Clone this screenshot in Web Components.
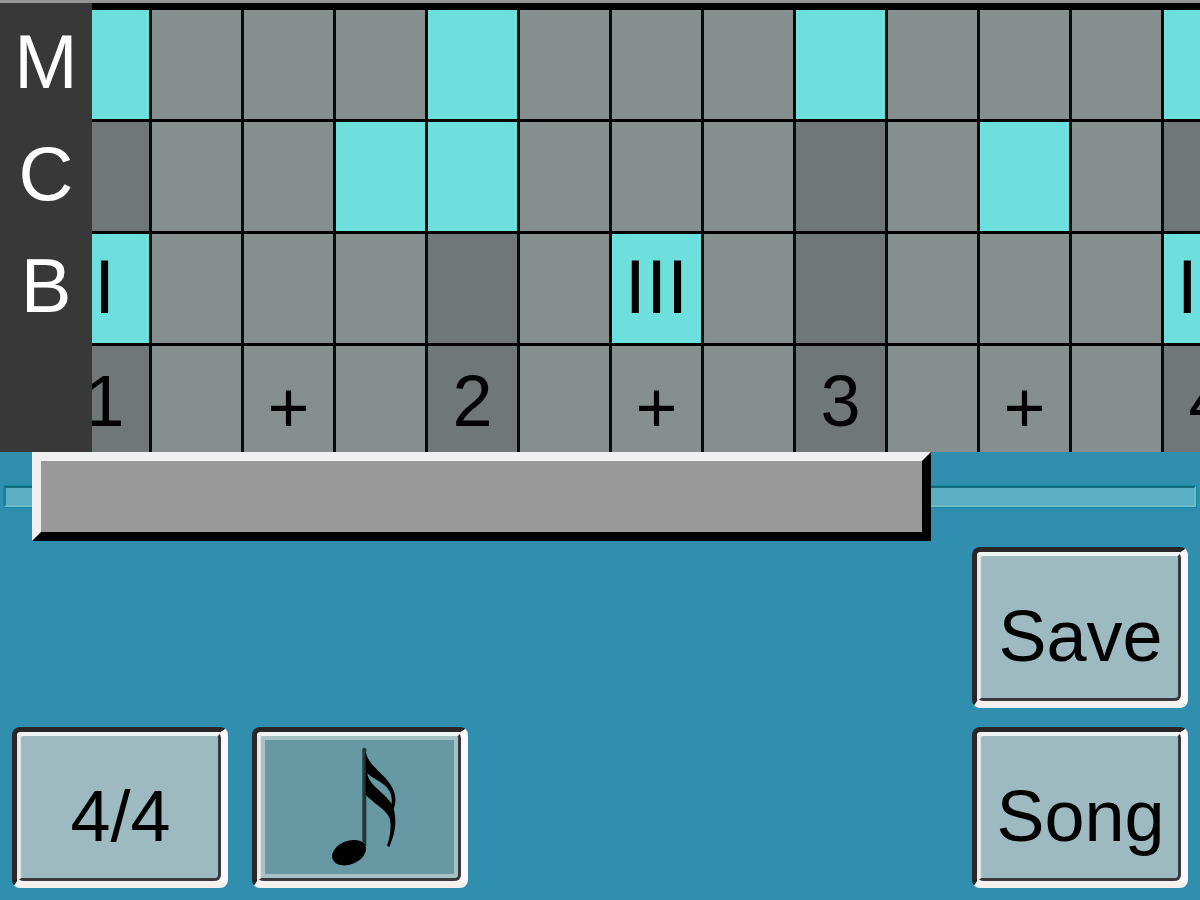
<!DOCTYPE html>
<html lang="en">
<head>
<meta charset="utf-8">
<title>Pattern editor</title>
<style>
  html, body { margin: 0; min-height: 100%; background: #308eaf; }
  body { font-family: "Liberation Sans", Arial, sans-serif; color: #000; }
</style>
</head>
<body>
<pattern-editor></pattern-editor>
<script>
const define = (name, html, setup) => {
  const template = document.createElement('template');
  template.innerHTML = html;
  customElements.define(name, class extends HTMLElement {
    connectedCallback() {
      if (this.shadowRoot) return;
      this.attachShadow({ mode: 'open' }).append(template.content.cloneNode(true));
      if (setup) setup(this, this.shadowRoot);
    }
  });
};

// One row of sixteenth steps: "#" lit, "d" on the beat, "." off the beat.
define('step-row', `
<style>
  :host { display: flex; height: 112px; overflow: hidden; }
  .name { flex: none; width: 92px; background: #383838; color: #fff; }
  .name, button, .count { display: flex; align-items: center; justify-content: center;
          box-sizing: border-box; font-size: 76px; line-height: 80px; padding: 0 0 4px; }
  .name { padding-bottom: 8px; }
  .clip { flex: 1; min-width: 0; overflow: hidden; background: #848f8e; border-bottom: 3px solid #000; }
  .steps { display: flex; height: 100%; margin-left: -32px; }
  button, .count { flex: none; width: 92px; margin: 0; border: 0; border-right: 3px solid #050b0b;
          border-radius: 0; background: #848f8e; font-family: inherit; color: #000; }
  .beat { background: #6f7777; }
  .lit { background: #6ddfdc; }
  .count { padding: 4px 0 0; font-size: 72px; }
  .and { padding-top: 16px; }
  :host([counts]) { height: 106px; }
  :host([counts]) .clip { border-bottom: 0; }
</style>
<div class="name"></div>
<div class="clip"><div class="steps"></div></div>`, (host, root) => {
  root.querySelector('.name').textContent = host.getAttribute('name') || '';
  const steps = root.querySelector('.steps');
  const labels = (host.getAttribute('labels') || '').split(',');
  const counts = host.hasAttribute('counts');
  [...host.getAttribute('pattern')].forEach((mark, i) => {
    const cell = document.createElement(counts ? 'span' : 'button');
    if (counts) cell.className = 'count';
    if (mark === '#') cell.classList.add('lit');
    if (mark === 'd') cell.classList.add('beat');
    cell.textContent = labels[i] || '';
    if (labels[i] === '+') cell.classList.add('and');
    if (!counts) {
      cell.type = 'button';
      cell.setAttribute('aria-label', `${host.getAttribute('name')} step ${i + 1} ${labels[i] || ''}`.trim());
      cell.setAttribute('aria-pressed', mark === '#');
      cell.onclick = () => cell.setAttribute('aria-pressed', cell.classList.toggle('lit'));
    }
    steps.append(cell);
  });
});

define('step-grid', `
<style>
  :host { display: block; border-top: 3px solid #969696; background: #000; }
  .edge { height: 7px; border-left: 92px solid #383838; background: #000; }
</style>
<div class="edge"></div>
<slot></slot>`);

define('pattern-scroller', `
<style>
  :host { display: block; padding: 0 4px; }
  input { -webkit-appearance: none; appearance: none; display: block; width: 100%; height: 89px;
          margin: 0; background: none; outline: none; }
  input::-webkit-slider-runnable-track { box-sizing: border-box; height: 21px; background: #5bb0c6;
          border: 2px solid; border-color: #116c7f #6dbbc5 #6dbbc5 #1a8299;
          box-shadow: 0 0 0 1px #168aa4; }
  input::-webkit-slider-thumb { -webkit-appearance: none; position: relative; box-sizing: border-box;
          width: 899px; height: 89px; margin-top: -36px; background: #999; border: 9px solid;
          border-color: #f0f0f0 #000 #000 #f0f0f0; border-radius: 0; }
</style>
<input type="range" min="0" max="100" value="9" aria-label="Scroll pattern">`);

define('bevel-button', `
<style>
  :host { display: block; height: 161px; }
  button { display: flex; width: 100%; height: 100%; margin: 0; padding: 0; box-sizing: border-box;
          border: 5px solid; border-width: 5px 7px 7px 5px;
          border-color: #2b2729 #fbf9f9 #f4f1ef #2b2729; border-radius: 8px; background: #f4f4f4;
          font-family: inherit; color: #000; }
  .face { flex: 1; align-self: stretch; display: flex; align-items: center; justify-content: center;
          box-sizing: border-box; border: 4px solid; border-width: 4px 3px 3px 4px;
          border-color: #eef3f3 #39383c #39383c #e6e8e8; border-radius: 6px;
          background: #9dbac1; font-size: 72px; line-height: 80px; padding: 18px 0 0 2px; }
  :host([pressed]) .face { padding: 0 0 0 8px; background: #6699a3; box-shadow: inset 0 0 0 4px #a6c2c4; }
</style>
<button type="button"><span class="face"><slot></slot></span></button>`, (host, root) => {
  const label = host.getAttribute('label');
  if (label) root.querySelector('button').setAttribute('aria-label', label);
});

define('sixteenth-note', `
<style>
  :host { display: block; line-height: 0; }
  svg { display: block; width: 66px; height: 120px; }
</style>
<svg viewBox="272 88 198 360" aria-hidden="true">
  <path d="M366 94Q372 87 378 94V385H366Z" fill="#24363a"/>
  <ellipse cx="326" cy="405" rx="53" ry="35" transform="rotate(-22 326 405)"/>
  <path d="M376 104C386 146 430 166 453 205C468 229 468 254 460 274C469 305 465 342 455 366L447 388L440 384C450 354 454 326 448 302C438 275 397 255 376 232V158ZM381 166C385 203 430 222 454 258C456 231 448 214 428 199C409 185 391 178 381 166Z" fill-rule="evenodd"/>
</svg>`);

define('control-panel', `
<style>
  :host { display: grid; grid-template-columns: 216px 216px 1fr 216px; gap: 19px 24px;
          padding: 6px 12px 12px; }
  .save { grid-column: 4; }
  .song { grid-column: 4; grid-row: 2; }
  .meter { grid-column: 1; grid-row: 2; }
  .note { grid-column: 2; grid-row: 2; }
</style>
<bevel-button class="save">Save</bevel-button>
<bevel-button class="meter">4/4</bevel-button>
<bevel-button class="note" pressed label="Sixteenth notes"><sixteenth-note></sixteenth-note></bevel-button>
<bevel-button class="song">Song</bevel-button>`);

define('pattern-editor', `
<style>
  :host { display: block; background: #308eaf; }
</style>
<step-grid>
  <step-row name="M" pattern="#...#...#...#"></step-row>
  <step-row name="C" pattern="d..##...d.#.d"></step-row>
  <step-row name="B" pattern="#...d.#.d...#" labels="I,,,,,,III,,,,,,III"></step-row>
  <step-row counts pattern="d...d...d...d" labels="1,,+,,2,,+,,3,,+,,4"></step-row>
</step-grid>
<pattern-scroller></pattern-scroller>
<control-panel></control-panel>`);
</script>
</body>
</html>
